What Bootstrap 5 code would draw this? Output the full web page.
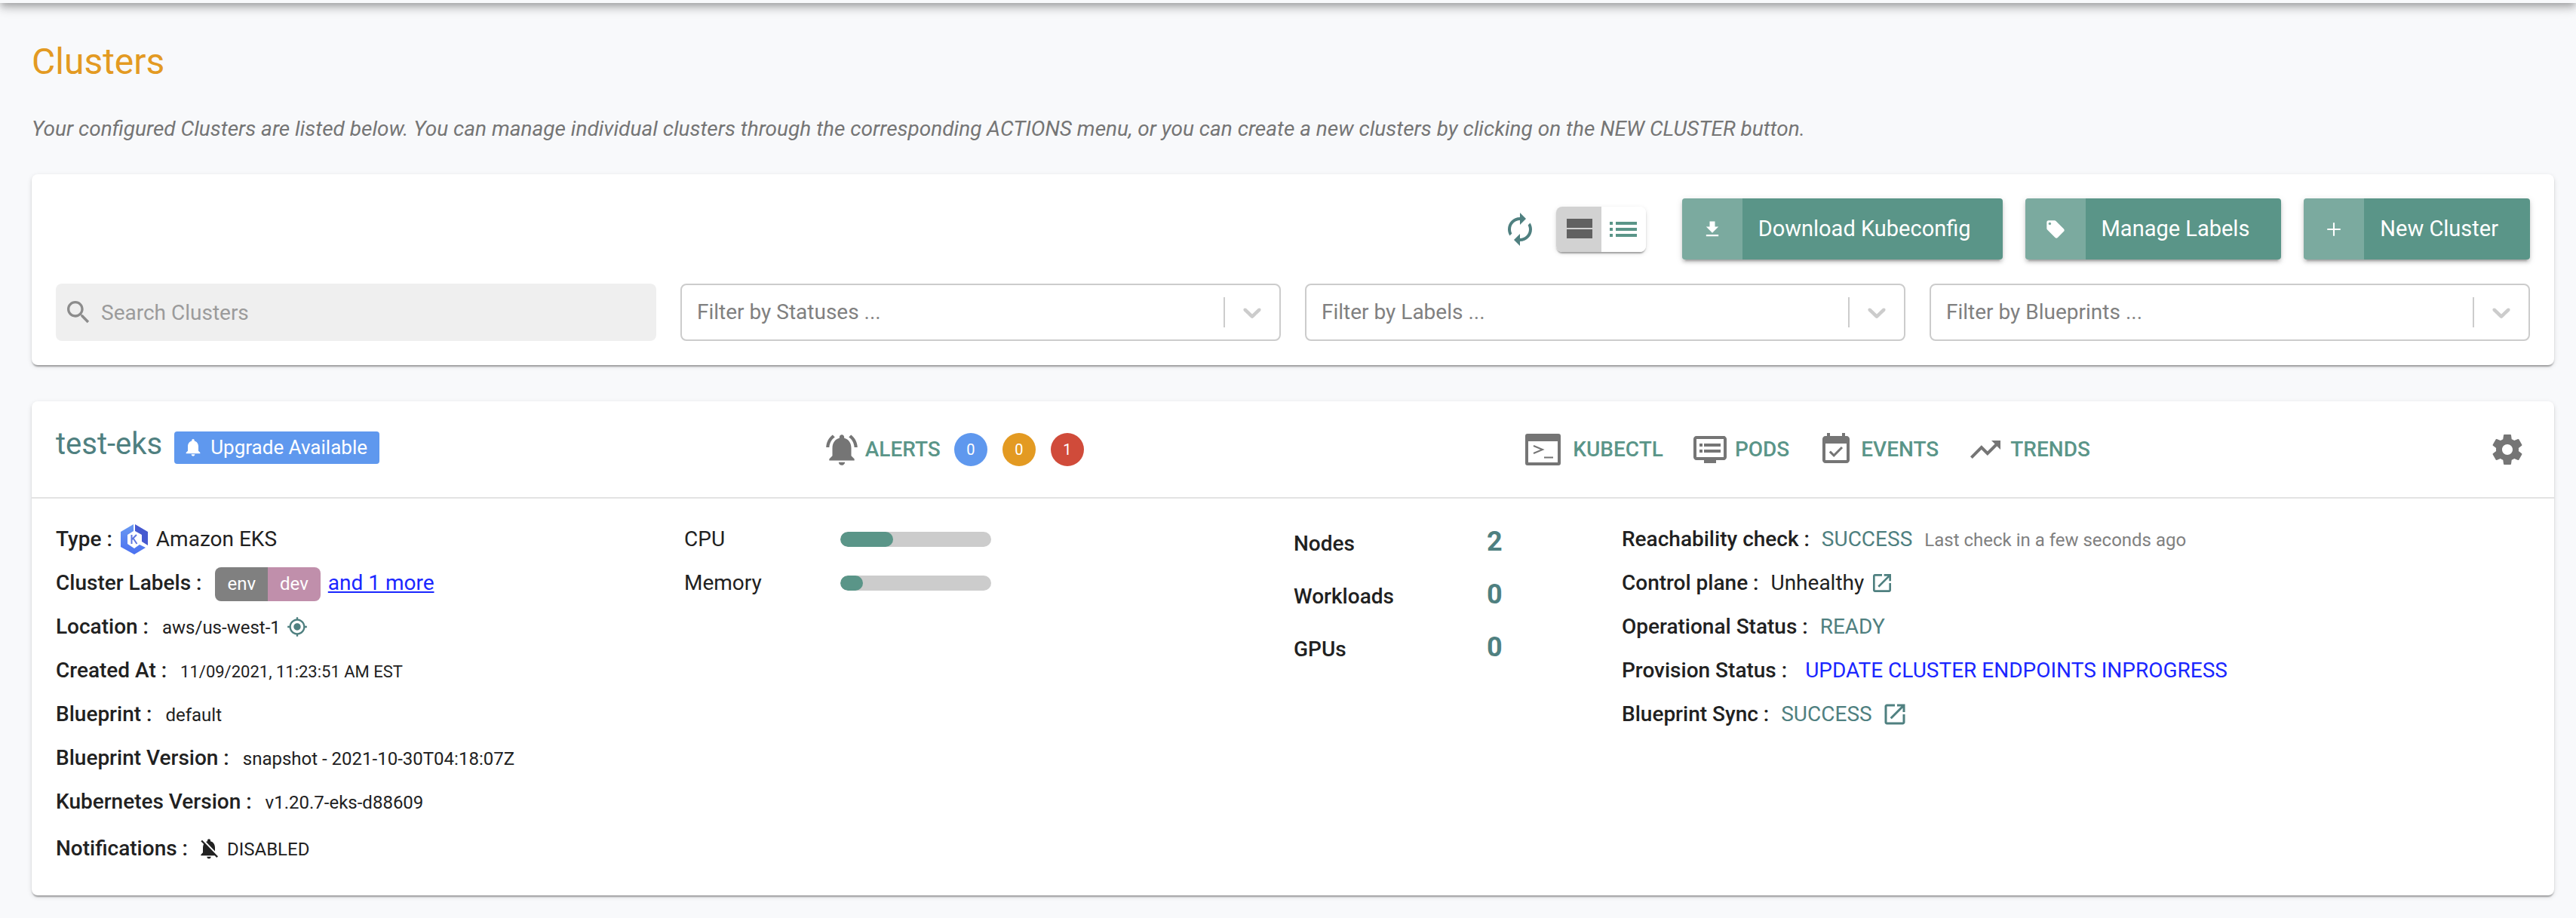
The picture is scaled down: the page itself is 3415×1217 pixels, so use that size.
<!DOCTYPE html>
<html lang="en">
<head>
<meta charset="utf-8">
<meta name="viewport" content="width=device-width, initial-scale=1">
<title>Clusters</title>
<link href="https://cdn.jsdelivr.net/npm/bootstrap@5.3.0/dist/css/bootstrap.min.css" rel="stylesheet">
<style>
:root{--green:#5a9588;--teal:#4f8080;--ink:#212121;--muted:#757575;--blue:#1a26ff}
body{background:#f8f9fb;color:var(--ink);font-family:Roboto,"Liberation Sans",sans-serif;font-size:28px;line-height:32px}
svg{fill:currentColor;flex:none;display:block}
.i28{width:28px;height:28px}.i32{width:32px;height:32px}.i36{width:36px;height:36px}.i40{width:40px;height:40px}.i48{width:48px;height:48px}
.topbar{height:64px;margin-top:-60px;background:#f8f9fb;box-shadow:0 4px 8px -2px rgba(0,0,0,.2),0 8px 10px 0 rgba(0,0,0,.14),0 2px 20px 0 rgba(0,0,0,.12)}
.page{padding:50px 29px 30px 42px}
.page-title{font-size:48px;line-height:56px;font-weight:400;color:#e39a22;margin-bottom:45px}
.page-intro{font-style:italic;color:var(--muted);margin-bottom:44px}
.panel{background:#fff;border:0;border-radius:8px;box-shadow:0 4px 2px -2px rgba(0,0,0,.2),0 2px 2px 0 rgba(0,0,0,.14),0 2px 6px 0 rgba(0,0,0,.12)}
.toolbar-panel{padding:32px;margin-bottom:48px}
.toolbar{gap:30px;margin-bottom:32px}
.refresh{color:var(--teal);margin-right:-6px}
.view-toggle{margin-right:18px;border-radius:8px;box-shadow:0 4px 2px -2px rgba(0,0,0,.2),0 2px 2px 0 rgba(0,0,0,.14),0 2px 6px 0 rgba(0,0,0,.12)}
.view-toggle .btn{width:60px;height:60px;padding:0;border:0;border-radius:8px;background:#fff;color:var(--green)}
.view-toggle .btn.active{background:#d2d2d2;color:#616161}
.btn-action{height:81px;padding:0;border:0;border-radius:4px;background:var(--green);color:#fff;font-size:29px;overflow:hidden;box-shadow:0 6px 2px -4px rgba(0,0,0,.2),0 4px 4px 0 rgba(0,0,0,.14),0 2px 10px 0 rgba(0,0,0,.12)}
.btn-action:hover{background:#4d8377;color:#fff}
.btn-action .cell{width:80px;background:rgba(255,255,255,.2)}
.btn-action .txt{padding:0 42px 0 21px}
.filters{display:grid;grid-template-columns:repeat(4,minmax(0,1fr));gap:32px}
.search-box{height:76px;background:#efefef;border-radius:8px;padding:0 10px;color:#8c8c8c}
.search-box input{border:0;background:none;padding:0 0 0 10px;font-size:28px;height:76px;box-shadow:none!important}
.search-box input:focus{background:none}
.search-box input::placeholder{color:#9b9b9b}
.filters .form-select{height:76px;border:2px solid #ccc;border-radius:8px;padding:0 80px 0 20px;font-size:28px;color:gray;background-color:#fff;background-position:right 16px center;background-size:58px 40px;
background-image:url("data:image/svg+xml,%3Csvg xmlns='http://www.w3.org/2000/svg' viewBox='0 0 58 40'%3E%3Cpath fill='%23ccc' d='M0 0h2v40H0z'/%3E%3Cpath fill='%23ccc' transform='translate(18) scale(2)' d='M4.516 7.548c0.436-0.446 1.043-0.481 1.576 0l3.908 3.747 3.908-3.747c0.533-0.481 1.141-0.446 1.574 0 0.436 0.445 0.408 1.197 0 1.615-0.406 0.418-4.695 4.502-4.695 4.502-0.217 0.223-0.502 0.335-0.787 0.335s-0.57-0.112-0.789-0.335c0 0-4.287-4.084-4.695-4.502s-0.436-1.17 0-1.615z'/%3E%3C/svg%3E")}
.cluster-head{display:grid;grid-template-columns:31% 28.4% 1fr auto;align-items:center;height:129px;padding:0 32px;border-bottom:2px solid #e3e3e3}
.cluster-title{margin-bottom:12px}
.cluster-name{font-size:40px;line-height:48px;color:var(--teal);text-decoration:none}
.upgrade{height:43px;line-height:43px;border-radius:4px;background:#5f98ee;color:#fff;font-size:26px;padding:0 16px 0 11px;gap:9px}
.head-link{color:var(--green);font-weight:500;text-decoration:none;gap:9px}
.head-link svg{color:var(--muted)}
.alerts{gap:18px}
.alerts .head-link{gap:6px}
.counts{gap:20px}
.tools{gap:38px}
.tools .kubectl{gap:16px}
.count{width:44px;height:44px;border-radius:50%;color:#fff;font-size:20px;line-height:44px;text-align:center}
.c-info{background:#5f98ee}.c-warn{background:#e39a22}.c-crit{background:#d04b3a}
.gear{color:var(--muted);margin-right:6px}
.cluster-body{display:grid;grid-template-columns:833fr 808fr 435fr 1204fr;padding:25px 32px 33px}
.line{height:58px;margin:0;display:flex;align-items:baseline;white-space:nowrap}
.line dt{font-weight:500;line-height:58px;margin-right:16px}
.specs .line dt{margin-right:18px}
.specs .line .tight{margin-right:8px}
.specs .line .snug{margin-right:12px}
.line dd{margin:0;line-height:28px}
.line svg{align-self:center}
.val{font-size:24px}
.stamp{font-size:22px}
.ago{color:gray}
.tealtxt{color:var(--teal)}
.bluetxt{color:var(--blue)}
.tagpair{font-size:24px;color:#fff}
.tagpair span{display:inline-block;line-height:45px;padding:0 16px}
.tagpair .k{background:gray;border-radius:8px 0 0 8px}
.tagpair .v{background:#c08fab;border-radius:0 8px 8px 0}
.more{padding-left:10px}
.meter-name{width:207px;line-height:58px}
.progress{width:200px;height:20px;border-radius:10px;background:#ccc;align-self:center}
.progress-bar{border-radius:10px;background:var(--green)}
.stat{height:70px;display:flex;align-items:baseline}
.stat dt{width:256px;font-weight:500;line-height:70px}
.stat dd{margin:0;font-size:36px;font-weight:700;line-height:36px;color:var(--teal)}
</style>
</head>
<body>
<div class="topbar"></div>
<main class="page">
  <h1 class="page-title">Clusters</h1>
  <p class="page-intro">Your configured Clusters are listed below. You can manage individual clusters through the corresponding ACTIONS menu, or you can create a new clusters by clicking on the NEW CLUSTER button.</p>

  <section class="panel toolbar-panel">
    <div class="toolbar d-flex justify-content-end align-items-center">
      <button type="button" class="btn p-0 border-0 refresh" aria-label="Refresh"><svg class="i48" viewBox="0 0 24 24"><path d="M12 6v3l4-4-4-4v3c-4.42 0-8 3.58-8 8 0 1.57.46 3.03 1.24 4.26L6.7 14.8c-.45-.83-.7-1.79-.7-2.8 0-3.31 2.69-6 6-6zm6.76 1.74L17.3 9.2c.44.84.7 1.79.7 2.8 0 3.31-2.69 6-6 6v-3l-4 4 4 4v-3c4.42 0 8-3.58 8-8 0-1.57-.46-3.03-1.24-4.26z"/></svg></button>
      <div class="btn-group view-toggle" role="group" aria-label="View">
        <button type="button" class="btn active d-flex align-items-center justify-content-center" aria-label="Card view"><svg class="i48" viewBox="0 0 24 24"><path d="M4 18h17v-6H4v6zM4 5v6h17V5H4z"/></svg></button>
        <button type="button" class="btn d-flex align-items-center justify-content-center" aria-label="List view"><svg class="i48" viewBox="0 0 24 24"><path d="M3 13h2v-2H3v2zm0 4h2v-2H3v2zm0-8h2V7H3v2zm4 4h14v-2H7v2zm0 4h14v-2H7v2zM7 7v2h14V7H7z"/></svg></button>
      </div>
      <button type="button" class="btn btn-action d-flex align-items-stretch"><span class="cell d-flex align-items-center justify-content-center"><svg class="i28" viewBox="0 0 24 24"><path d="M19 9h-4V3H9v6H5l7 7 7-7zM5 18v2h14v-2H5z"/></svg></span><span class="txt align-self-center">Download Kubeconfig</span></button>
      <button type="button" class="btn btn-action d-flex align-items-stretch"><span class="cell d-flex align-items-center justify-content-center"><svg class="i28" viewBox="0 0 24 24"><path d="M21.41 11.58l-9-9C12.05 2.22 11.55 2 11 2H4c-1.1 0-2 .9-2 2v7c0 .55.22 1.05.59 1.42l9 9c.36.36.86.58 1.41.58.55 0 1.05-.22 1.41-.59l7-7c.37-.36.59-.86.59-1.41 0-.55-.23-1.06-.59-1.42zM5.5 7C4.67 7 4 6.33 4 5.5S4.67 4 5.5 4 7 4.67 7 5.5 6.33 7 5.5 7z"/></svg></span><span class="txt align-self-center">Manage Labels</span></button>
      <button type="button" class="btn btn-action d-flex align-items-stretch"><span class="cell d-flex align-items-center justify-content-center"><svg class="i28" viewBox="0 0 24 24"><path d="M19.5 12.9h-6.6v6.6h-1.8v-6.6H4.5v-1.8h6.6V4.5h1.8v6.6h6.6z"/></svg></span><span class="txt align-self-center">New Cluster</span></button>
    </div>
    <div class="filters">
      <label class="search-box d-flex align-items-center"><svg class="i40" viewBox="0 0 24 24"><path d="M15.5 14h-.79l-.28-.27C15.41 12.59 16 11.11 16 9.5 16 5.91 13.09 3 9.5 3S3 5.91 3 9.5 5.91 16 9.5 16c1.61 0 3.09-.59 4.23-1.57l.27.28v.79l5 4.99L20.49 19l-4.99-5zm-6 0C7.01 14 5 11.99 5 9.5S7.01 5 9.5 5 14 7.01 14 9.5 11.99 14 9.5 14z"/></svg><input type="text" class="form-control" placeholder="Search Clusters" aria-label="Search Clusters"></label>
      <select class="form-select" aria-label="Filter by Statuses"><option>Filter by Statuses ...</option></select>
      <select class="form-select" aria-label="Filter by Labels"><option>Filter by Labels ...</option></select>
      <select class="form-select" aria-label="Filter by Blueprints"><option>Filter by Blueprints ...</option></select>
    </div>
  </section>

  <section class="panel">
    <header class="cluster-head">
      <div class="cluster-title d-flex align-items-baseline">
        <a href="#" class="cluster-name me-3">test-eks</a>
        <span class="upgrade d-flex align-items-baseline"><svg class="i28 align-self-center" viewBox="0 0 24 24"><path d="M12 22c1.1 0 2-.9 2-2h-4c0 1.1.89 2 2 2zm6-6v-5c0-3.07-1.64-5.64-4.5-6.32V4c0-.83-.67-1.5-1.5-1.5s-1.5.67-1.5 1.5v.68C7.63 5.36 6 7.92 6 11v5l-2 2v1h16v-1l-2-2z"/></svg><span>Upgrade Available</span></span>
      </div>
      <div class="alerts d-flex align-items-center">
        <a href="#" class="head-link d-flex align-items-center"><svg width="50" height="50" viewBox="0 0 24 24"><path d="M7.58 4.08L6.15 2.65C3.75 4.48 2.17 7.3 2.03 10.5h2c.15-2.65 1.51-4.97 3.55-6.42zm12.39 6.42h2c-.15-3.2-1.73-6.02-4.12-7.85l-1.42 1.43c2.02 1.45 3.39 3.77 3.54 6.42zM18 11c0-3.07-1.64-5.64-4.5-6.32V4c0-.83-.67-1.5-1.5-1.5s-1.5.67-1.5 1.5v.68C7.63 5.36 6 7.92 6 11v5l-2 2v1h16v-1l-2-2v-5zm-6 11c.14 0 .27-.01.4-.04.65-.14 1.18-.58 1.44-1.18.1-.24.15-.5.15-.78h-4c.01 1.1.9 2 2.01 2z"/></svg>ALERTS</a>
        <div class="counts d-flex"><span class="count c-info">0</span><span class="count c-warn">0</span><span class="count c-crit">1</span></div>
      </div>
      <nav class="tools d-flex align-items-center" aria-label="Cluster tools">
        <a href="#" class="head-link kubectl d-flex align-items-center"><svg width="47" height="42" viewBox="0 0 47 42"><path fill-rule="evenodd" d="M3 0h41a3 3 0 0 1 3 3v36a3 3 0 0 1-3 3H3a3 3 0 0 1-3-3V3a3 3 0 0 1 3-3zm1 10v28h39V10z"/><path d="M11 16l12 5-12 5M25 31.5h12" fill="none" stroke="currentColor" stroke-width="2"/></svg>KUBECTL</a>
        <a href="#" class="head-link d-flex align-items-center"><svg class="i48" viewBox="0 0 24 24"><path d="M21 3H3c-1.1 0-2 .9-2 2v12c0 1.1.9 2 2 2h5v2h8v-2h5c1.1 0 2-.9 2-2V5c0-1.1-.9-2-2-2zm0 14H3V5h18v12zm-2-9H8v2h11V8zm0 4H8v2h11v-2zM7 8H5v2h2V8zm0 4H5v2h2v-2z"/></svg>PODS</a>
        <a href="#" class="head-link d-flex align-items-center"><svg class="i48" viewBox="0 0 24 24"><path d="M16.53 11.06L15.47 10l-4.88 4.88-2.12-2.12-1.06 1.06L10.59 17l5.94-5.94zM19 3h-1V1h-2v2H8V1H6v2H5c-1.11 0-1.99.9-1.99 2L3 19c0 1.1.89 2 2 2h14c1.1 0 2-.9 2-2V5c0-1.1-.9-2-2-2zm0 16H5V8h14v11z"/></svg>EVENTS</a>
        <a href="#" class="head-link d-flex align-items-center"><svg class="i48" viewBox="0 0 24 24"><path d="M16 6l2.29 2.29-4.88 4.88-4-4L2 16.59 3.41 18l6-6 4 4 6.3-6.29L22 12V6z"/></svg>TRENDS</a>
      </nav>
      <button type="button" class="btn p-0 border-0 gear" aria-label="Settings"><svg class="i48" viewBox="0 0 24 24"><path d="M19.43 12.98c.04-.32.07-.64.07-.98s-.03-.66-.07-.98l2.11-1.65c.19-.15.24-.42.12-.64l-2-3.46c-.12-.22-.39-.3-.61-.22l-2.49 1c-.52-.4-1.08-.73-1.69-.98l-.38-2.65C14.46 2.18 14.25 2 14 2h-4c-.25 0-.46.18-.49.42l-.38 2.65c-.61.25-1.17.59-1.69.98l-2.49-1c-.23-.09-.49 0-.61.22l-2 3.46c-.13.22-.07.49.12.64l2.11 1.65c-.04.32-.07.65-.07.98s.03.66.07.98l-2.11 1.65c-.19.15-.24.42-.12.64l2 3.46c.12.22.39.3.61.22l2.49-1c.52.4 1.08.73 1.69.98l.38 2.65c.03.24.24.42.49.42h4c.25 0 .46-.18.49-.42l.38-2.65c.61-.25 1.17-.59 1.69-.98l2.49 1c.23.09.49 0 .61-.22l2-3.46c.12-.22.07-.49-.12-.64l-2.11-1.65zM12 15.5c-1.93 0-3.5-1.57-3.5-3.5s1.57-3.5 3.5-3.5 3.5 1.57 3.5 3.5-1.57 3.5-3.5 3.5z"/></svg></button>
    </header>
    <div class="cluster-body">
      <dl class="specs mb-0">
        <div class="line"><dt class="tight">Type :</dt><svg class="me-2" width="42" height="40" viewBox="2 0 42 40"><defs><linearGradient id="eksLight" x2="0" y2="1"><stop offset="0" stop-color="#6a9af2"/><stop offset="1" stop-color="#4a70f0"/></linearGradient></defs><path fill="url(#eksLight)" d="M22 0v9l-8 5v12l9 6 7-5 8 4-15 9L5 30V10z"/><path fill="#4659d0" d="M24 0l17 10v18l-8-5v-9l-9-5z"/><path d="M19.5 14v12M26 14l-6.5 6.5M21.5 18.5L26.5 26" fill="none" stroke="#5f77e0" stroke-width="2"/></svg><dd>Amazon EKS</dd></div>
        <div class="line"><dt>Cluster Labels :</dt><dd class="tagpair"><span class="k">env</span><span class="v">dev</span></dd><dd class="more"><a href="#" class="bluetxt">and 1 more</a></dd></div>
        <div class="line"><dt>Location :</dt><dd class="val me-2">aws/us-west-1</dd><svg class="i28 tealtxt" viewBox="0 0 24 24"><path d="M12 8c-2.21 0-4 1.79-4 4s1.79 4 4 4 4-1.79 4-4-1.79-4-4-4zm8.94 3c-.46-4.17-3.77-7.48-7.94-7.94V1h-2v2.06C6.83 3.52 3.52 6.83 3.06 11H1v2h2.06c.46 4.17 3.77 7.48 7.94 7.94V23h2v-2.06c4.17-.46 7.48-3.77 7.94-7.94H23v-2h-2.06zM12 19c-3.87 0-7-3.13-7-7s3.13-7 7-7 7 3.13 7 7-3.13 7-7 7z"/></svg></div>
        <div class="line"><dt>Created At :</dt><dd class="stamp">11/09/2021, 11:23:51 AM EST</dd></div>
        <div class="line"><dt>Blueprint :</dt><dd class="val">default</dd></div>
        <div class="line"><dt>Blueprint Version :</dt><dd class="val">snapshot - 2021-10-30T04:18:07Z</dd></div>
        <div class="line"><dt>Kubernetes Version :</dt><dd class="val">v1.20.7-eks-d88609</dd></div>
        <div class="line mt-1"><dt class="snug">Notifications :</dt><svg class="me-2 i32" viewBox="0 0 24 24"><path d="M20 18.69L7.84 6.14 5.27 3.49 4 4.76l2.8 2.8v.01c-.52.99-.8 2.16-.8 3.42v5l-2 2v1h13.73l2 2L21 19.72l-1-1.03zM12 22c1.11 0 2-.89 2-2h-4c0 1.11.89 2 2 2zm6-7.32V11c0-3.08-1.64-5.64-4.5-6.32V4c0-.83-.67-1.5-1.5-1.5s-1.5.67-1.5 1.5v.68c-.15.03-.29.08-.42.12-.1.03-.2.07-.3.11h-.01c-.01 0-.01 0-.02.01-.23.09-.46.2-.68.31 0 0-.01 0-.01.01L18 14.68z"/></svg><dd class="val">DISABLED</dd></div>
      </dl>
      <div>
        <div class="line"><span class="meter-name">CPU</span><div class="progress" role="progressbar" aria-label="CPU" aria-valuenow="35" aria-valuemin="0" aria-valuemax="100"><div class="progress-bar" style="width:35%"></div></div></div>
        <div class="line"><span class="meter-name">Memory</span><div class="progress" role="progressbar" aria-label="Memory" aria-valuenow="15" aria-valuemin="0" aria-valuemax="100"><div class="progress-bar" style="width:15%"></div></div></div>
      </div>
      <dl class="mb-0">
        <div class="stat"><dt>Nodes</dt><dd>2</dd></div>
        <div class="stat"><dt>Workloads</dt><dd>0</dd></div>
        <div class="stat"><dt>GPUs</dt><dd>0</dd></div>
      </dl>
      <dl class="mb-0">
        <div class="line"><dt>Reachability check :</dt><dd class="tealtxt me-3">SUCCESS</dd><dd class="val ago">Last check in a few seconds ago</dd></div>
        <div class="line"><dt>Control plane :</dt><dd class="me-2">Unhealthy</dd><svg class="i32 tealtxt" viewBox="0 0 24 24"><path d="M19 19H5V5h7V3H5c-1.11 0-2 .9-2 2v14c0 1.1.89 2 2 2h14c1.1 0 2-.9 2-2v-7h-2v7zM14 3v2h3.59l-9.83 9.83 1.41 1.41L19 6.41V10h2V3h-7z"/></svg></div>
        <div class="line"><dt>Operational Status :</dt><dd class="tealtxt">READY</dd></div>
        <div class="line"><dt>Provision Status :</dt><dd class="bluetxt ps-2">UPDATE CLUSTER ENDPOINTS INPROGRESS</dd></div>
        <div class="line"><dt>Blueprint Sync :</dt><dd class="tealtxt me-2">SUCCESS</dd><svg class="i36 ms-1 tealtxt" viewBox="0 0 24 24"><path d="M19 19H5V5h7V3H5c-1.11 0-2 .9-2 2v14c0 1.1.89 2 2 2h14c1.1 0 2-.9 2-2v-7h-2v7zM14 3v2h3.59l-9.83 9.83 1.41 1.41L19 6.41V10h2V3h-7z"/></svg></div>
      </dl>
    </div>
  </section>
</main>
<script src="https://cdn.jsdelivr.net/npm/bootstrap@5.3.0/dist/js/bootstrap.bundle.min.js"></script>
</body>
</html>
